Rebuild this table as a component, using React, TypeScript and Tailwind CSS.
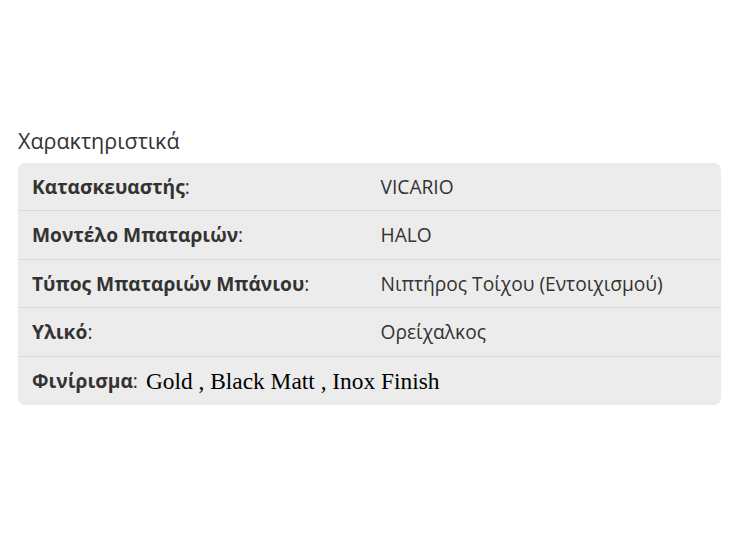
const rows = [
  { label: 'Κατασκευαστής', value: 'VICARIO' },
  { label: 'Μοντέλο Μπαταριών', value: 'HALO' },
  { label: 'Τύπος Μπαταριών Μπάνιου', value: 'Νιπτήρος Τοίχου (Εντοιχισμού)' },
  { label: 'Υλικό', value: 'Ορείχαλκος' },
];

export default function App() {
  return (
    <div className="min-h-[537px] w-full bg-white pt-[127px] px-[18px] font-['Open_Sans',sans-serif] text-[#333]">
      <h3 className="text-[21.5px] leading-[28px] mb-[8px]">Χαρακτηριστικά</h3>
      <div className="w-[703px] rounded-[7px] bg-[#ececec] overflow-hidden">
        {rows.map((r) => (
          <div key={r.label} className="grid grid-cols-2 h-[48.4px] items-center border-b border-[#dadada] pt-[1px]">
            <div className="pl-[14px] text-[19.2px]">
              <span className="font-bold">{r.label}</span>:
            </div>
            <div className="pl-[11px] text-[19.2px]">{r.value}</div>
          </div>
        ))}
        <div className="h-[48.4px] flex items-center pl-[14px] text-[19.2px] pt-[1px]">
          <span className="font-bold">Φινίρισμα</span>:
          <span className="ml-[8px] font-['Liberation_Serif',serif] text-[23.4px] text-black">
            Gold , Black Matt , Inox Finish
          </span>
        </div>
      </div>
    </div>
  );
}
